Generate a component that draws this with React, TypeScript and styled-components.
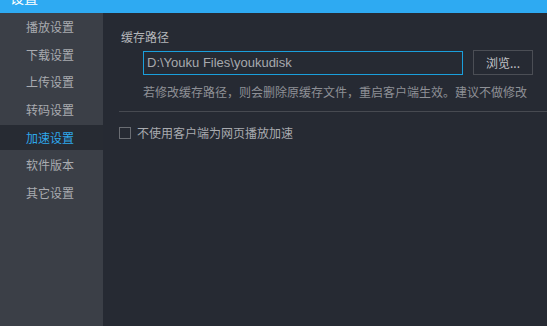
import React from "react";
import styled, { createGlobalStyle } from "styled-components";

const Global = createGlobalStyle`
  html, body { margin: 0; padding: 0; background: #262a33; }
  body { font-family: "Noto Sans CJK SC", "Noto Sans", sans-serif; }
  #root { width: 547px; height: 326px; overflow: hidden; }
`;

const Window = styled.div`
  width: 547px;
  height: 326px;
  display: flex;
  flex-direction: column;
  background: #262a33;
`;

const TitleBar = styled.div`
  height: 13px;
  flex: none;
  background: #2eaaf2;
  overflow: hidden;
  padding-left: 10px;
`;

const TitleText = styled.div`
  color: #ffffff;
  font-size: 14px;
  line-height: 14px;
  margin-top: -10px;
`;

const Body = styled.div`
  flex: 1;
  display: flex;
  min-height: 0;
`;

const Sidebar = styled.div`
  width: 103px;
  flex: none;
  background: #3b3f47;
  display: flex;
  flex-direction: column;
  gap: 2.6px;
  padding-top: 1.2px;
`;

const NavItem = styled.div<{ $active?: boolean }>`
  height: 25px;
  display: flex;
  align-items: center;
  padding-left: 26px;
  font-size: 12px;
  color: ${(p) => (p.$active ? "#2ea8ec" : "#a9abb0")};
  background: ${(p) => (p.$active ? "#272b33" : "transparent")};
`;

const Content = styled.div`
  flex: 1;
  display: flex;
  flex-direction: column;
  padding-left: 16px;
`;

const SectionLabel = styled.div`
  font-size: 12px;
  color: #b4b6ba;
  height: 16px;
  line-height: 16px;
  margin-top: 16px;
  padding-left: 2px;
`;

const PathRow = styled.div`
  display: flex;
  align-items: center;
  margin-top: 5px;
  padding-left: 24px;
`;

const PathInput = styled.div`
  width: 320px;
  height: 24px;
  box-sizing: border-box;
  border: 1px solid #1a9fdc;
  display: flex;
  align-items: center;
  padding-left: 3px;
  font-family: "Liberation Sans", "Noto Sans CJK SC", sans-serif;
  font-size: 13px;
  color: #a7a9ae;
`;

const BrowseButton = styled.div`
  margin-left: 10px;
  width: 60px;
  height: 25px;
  box-sizing: border-box;
  border: 1px solid #4b4e55;
  display: flex;
  align-items: center;
  justify-content: center;
  font-size: 12px;
  color: #c2c4c8;
`;

const Hint = styled.div`
  font-size: 12px;
  color: #8e9096;
  padding-left: 24px;
  margin-top: 9px;
  height: 16px;
  line-height: 16px;
`;

const Divider = styled.div`
  height: 1px;
  background: #474a51;
  margin-top: 11px;
`;

const CheckRow = styled.label`
  display: flex;
  align-items: center;
  margin-top: 12px;
  font-size: 12px;
  color: #a9abb0;
`;

const Box = styled.span`
  width: 12px;
  height: 12px;
  box-sizing: border-box;
  border: 1px solid #6a6d73;
  margin-right: 6px;
`;

const items = ["播放设置", "下载设置", "上传设置", "转码设置", "加速设置", "软件版本", "其它设置"];

export default function App() {
  return (
    <>
      <Global />
      <Window>
        <TitleBar>
          <TitleText>设置</TitleText>
        </TitleBar>
        <Body>
          <Sidebar>
            {items.map((t, i) => (
              <NavItem key={t} $active={i === 4}>
                {t}
              </NavItem>
            ))}
          </Sidebar>
          <Content>
            <SectionLabel>缓存路径</SectionLabel>
            <PathRow>
              <PathInput>D:\Youku Files\youkudisk</PathInput>
              <BrowseButton>浏览...</BrowseButton>
            </PathRow>
            <Hint>若修改缓存路径，则会删除原缓存文件，重启客户端生效。建议不做修改</Hint>
            <Divider />
            <CheckRow>
              <Box />
              不使用客户端为网页播放加速
            </CheckRow>
          </Content>
        </Body>
      </Window>
    </>
  );
}
